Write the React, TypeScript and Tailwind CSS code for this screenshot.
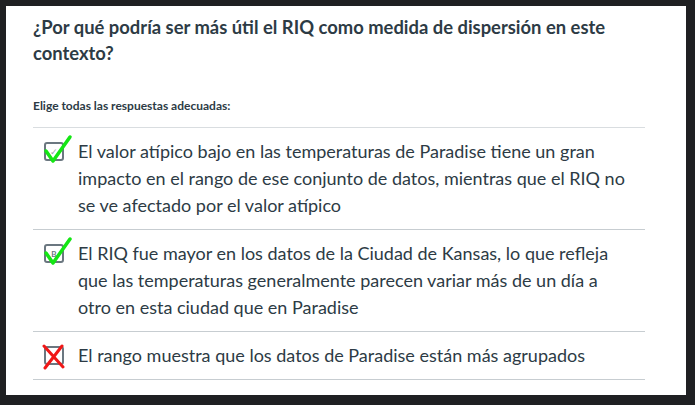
const options = [
  {
    text: 'El valor atípico bajo en las temperaturas de Paradise tiene un gran impacto en el rango de ese conjunto de datos, mientras que el RIQ no se ve afectado por el valor atípico',
    mark: 'check',
    inner: 'tick'
  },
  {
    text: 'El RIQ fue mayor en los datos de la Ciudad de Kansas, lo que refleja que las temperaturas generalmente parecen variar más de un día a otro en esta ciudad que en Paradise',
    mark: 'check',
    inner: 'B'
  },
  {
    text: 'El rango muestra que los datos de Paradise están más agrupados',
    mark: 'cross',
    inner: ''
  }
]

const Box = ({ mark, inner }: { mark: string; inner: string }) => (
  <div className="relative w-[20px] h-[19px] mt-[4px] border-2 border-[#6b7780] rounded-[3px] bg-white flex items-center justify-center">
    {inner === 'B' && <span className="text-[8px] leading-none text-[#6b7780] font-bold">B</span>}
    {inner === 'tick' && <span className="text-[9px] leading-none text-[#9aa3aa]">✓</span>}
    {mark === 'check' && (
      <svg className="absolute left-[-3px] top-[-10px] pointer-events-none" width="30" height="30" viewBox="0 0 30 30">
        <path d="M3 17 L10 27 L27 3" fill="none" stroke="#14e614" strokeWidth="3.5" strokeLinecap="round" strokeLinejoin="round" />
      </svg>
    )}
    {mark === 'cross' && (
      <svg className="absolute left-[-4px] top-[-5px] pointer-events-none" width="28" height="30" viewBox="0 0 28 30">
        <path d="M2 3 L21 24 M20 3 L3 25" fill="none" stroke="#f01818" strokeWidth="3" strokeLinecap="round" />
      </svg>
    )}
  </div>
)

const App = () => {
  return (
    <div className="w-[695px] h-[405px] bg-[#1f2022] pt-[6px] pl-[6px] font-['Lato',sans-serif]">
      <div className="w-[680px] h-[389px] bg-white pl-[27px] pt-[8px]">
        <h1 className="text-[18.4px] leading-[26px] font-bold text-[#2d3b45] w-[600px]">
          ¿Por qué podría ser más útil el RIQ como medida de dispersión en este contexto?
        </h1>
        <div className="mt-[32px] text-[12px] leading-[16px] font-bold text-[#2d3b45]">Elige todas las respuestas adecuadas:</div>
        <div className="mt-[13px] w-[612px] border-t border-[#d9dde0]">
          {options.map((o, i) => (
            <div key={i} className="flex py-[10px] border-b border-[#c7cdd1]">
              <div className="w-[45px] shrink-0 pl-[11px]">
                <Box mark={o.mark} inner={o.inner} />
              </div>
              <div className="w-[555px] text-[18px] leading-[27px] text-[#2d3b45]">{o.text}</div>
            </div>
          ))}
        </div>
      </div>
    </div>
  )
}

export default App
